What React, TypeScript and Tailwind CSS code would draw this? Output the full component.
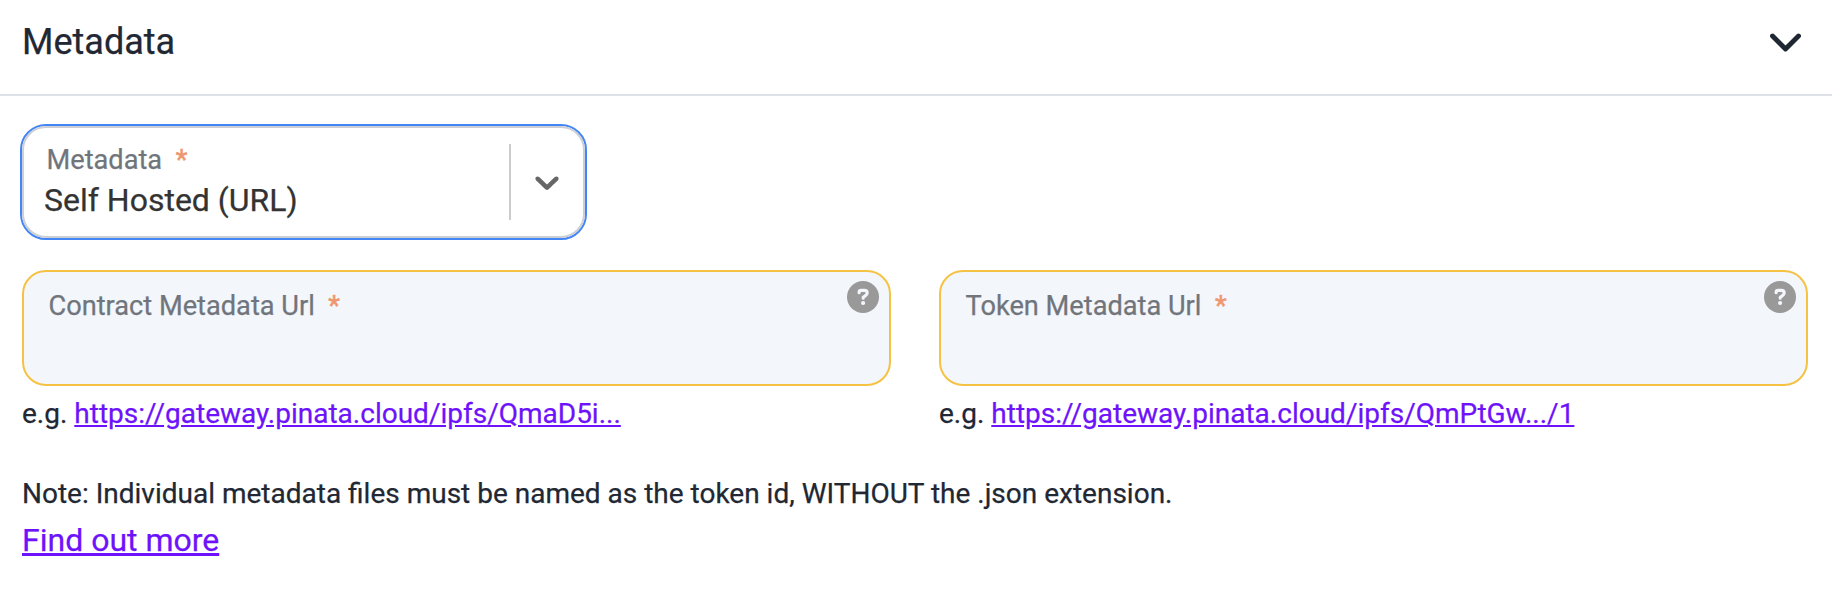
import React from "react";

function Required() {
  return <span className="ml-[13.5px] text-[#f0966e] [-webkit-text-stroke:0.5px]">*</span>;
}

function HelpIcon() {
  return (
    <svg viewBox="0 0 32 32" className="h-8 w-8 shrink-0" aria-hidden="true">
      <circle cx="16" cy="16" r="16" fill="#999999" />
      <path
        d="M12.1 11.8 V11.2 C12.1 9.9 13 9.4 14.2 9.4 H17.2 C19 9.4 20.2 10.5 20.2 12 C20.2 13.4 19.4 14.1 18.2 14.9 L16.2 16.2 V17.2"
        fill="none"
        stroke="#f3f6fb"
        strokeWidth="3.1"
        strokeLinecap="round"
        strokeLinejoin="round"
      />
      <circle cx="16.1" cy="22" r="2.1" fill="#f3f6fb" />
    </svg>
  );
}

type UrlFieldProps = { label: string; example: string };

function UrlField({ label, example }: UrlFieldProps) {
  return (
    <div className="min-w-0 flex-1">
      <label className="flex h-[116px] items-start justify-between rounded-[24px] border-2 border-[#f6c244] bg-[#f3f6fb] pr-[10px] pl-[24.5px]">
        <span className="pt-[18px] text-[27.2px] leading-8 text-[#70757c]">
          {label}
          <Required />
        </span>
        <span className="pt-[9px]">
          <HelpIcon />
        </span>
      </label>
      <p className="mt-[7px] text-[28px] leading-[42px]">
        e.g.{" "}
        <a href="#" className="text-[#6d12fb] underline">
          {example}
        </a>
      </p>
    </div>
  );
}

export default function App() {
  return (
    <main className="h-[594px] bg-white font-['Roboto',sans-serif] text-[#212733] [-webkit-text-stroke:0.25px]">
      <header className="flex h-24 items-start justify-between border-b-2 border-[#dee2e6] pr-[30px] pl-[22px]">
        <h2 className="pt-[15px] text-[36px] leading-[54px]">Metadata</h2>
        <svg viewBox="0 0 32 20" className="mt-[33px] h-5 w-8" fill="none" aria-hidden="true">
          <path d="M2.5 3 L15.5 16 L28.5 3" stroke="#1f2733" strokeWidth="4.9" strokeLinecap="round" strokeLinejoin="round" />
        </svg>
      </header>

      <section className="pr-6 pl-[22px]">
        <div className="mt-[28px] -ml-0.5 flex h-[116px] w-[567px] rounded-[26px] border-2 border-[#4285f4]">
          <div className="flex flex-1 rounded-[24px] border-2 border-[#cccfd6]">
            <div className="flex-1 pt-4 pl-5">
              <div className="pl-[2.5px] text-[27.2px] leading-8 text-[#70757c]">
                Metadata
                <Required />
              </div>
              <div className="mt-1 text-[32px] leading-10 text-[#333333]">Self Hosted (URL)</div>
            </div>
            <span className="my-4 w-0.5 bg-[#cccccc]" />
            <div className="flex w-[72px] items-center justify-center">
              <svg viewBox="0 0 20 20" className="h-10 w-10" fill="#666666" aria-hidden="true">
                <path d="M4.516 7.548c0.436-0.446 1.043-0.481 1.576 0l3.908 3.747 3.908-3.747c0.533-0.481 1.141-0.446 1.574 0 0.436 0.445 0.408 1.197 0 1.615-0.406 0.418-4.695 4.502-4.695 4.502-0.217 0.223-0.502 0.335-0.787 0.335s-0.57-0.112-0.789-0.335c0 0-4.287-4.084-4.695-4.502s-0.436-1.17 0-1.615z" />
              </svg>
            </div>
          </div>
        </div>

        <div className="mt-[30px] flex gap-12">
          <UrlField label="Contract Metadata Url" example="https://gateway.pinata.cloud/ipfs/QmaD5i..." />
          <UrlField label="Token Metadata Url" example="https://gateway.pinata.cloud/ipfs/QmPtGw.../1" />
        </div>

        <p className="mt-[38px] text-[28px] leading-[42px]">
          Note: Individual metadata files must be named as the token id, WITHOUT the .json extension.
        </p>
        <a href="#" className="mt-px inline-block text-[32px] leading-[48px] text-[#6d12fb] underline">
          Find out more
        </a>
      </section>
    </main>
  );
}
